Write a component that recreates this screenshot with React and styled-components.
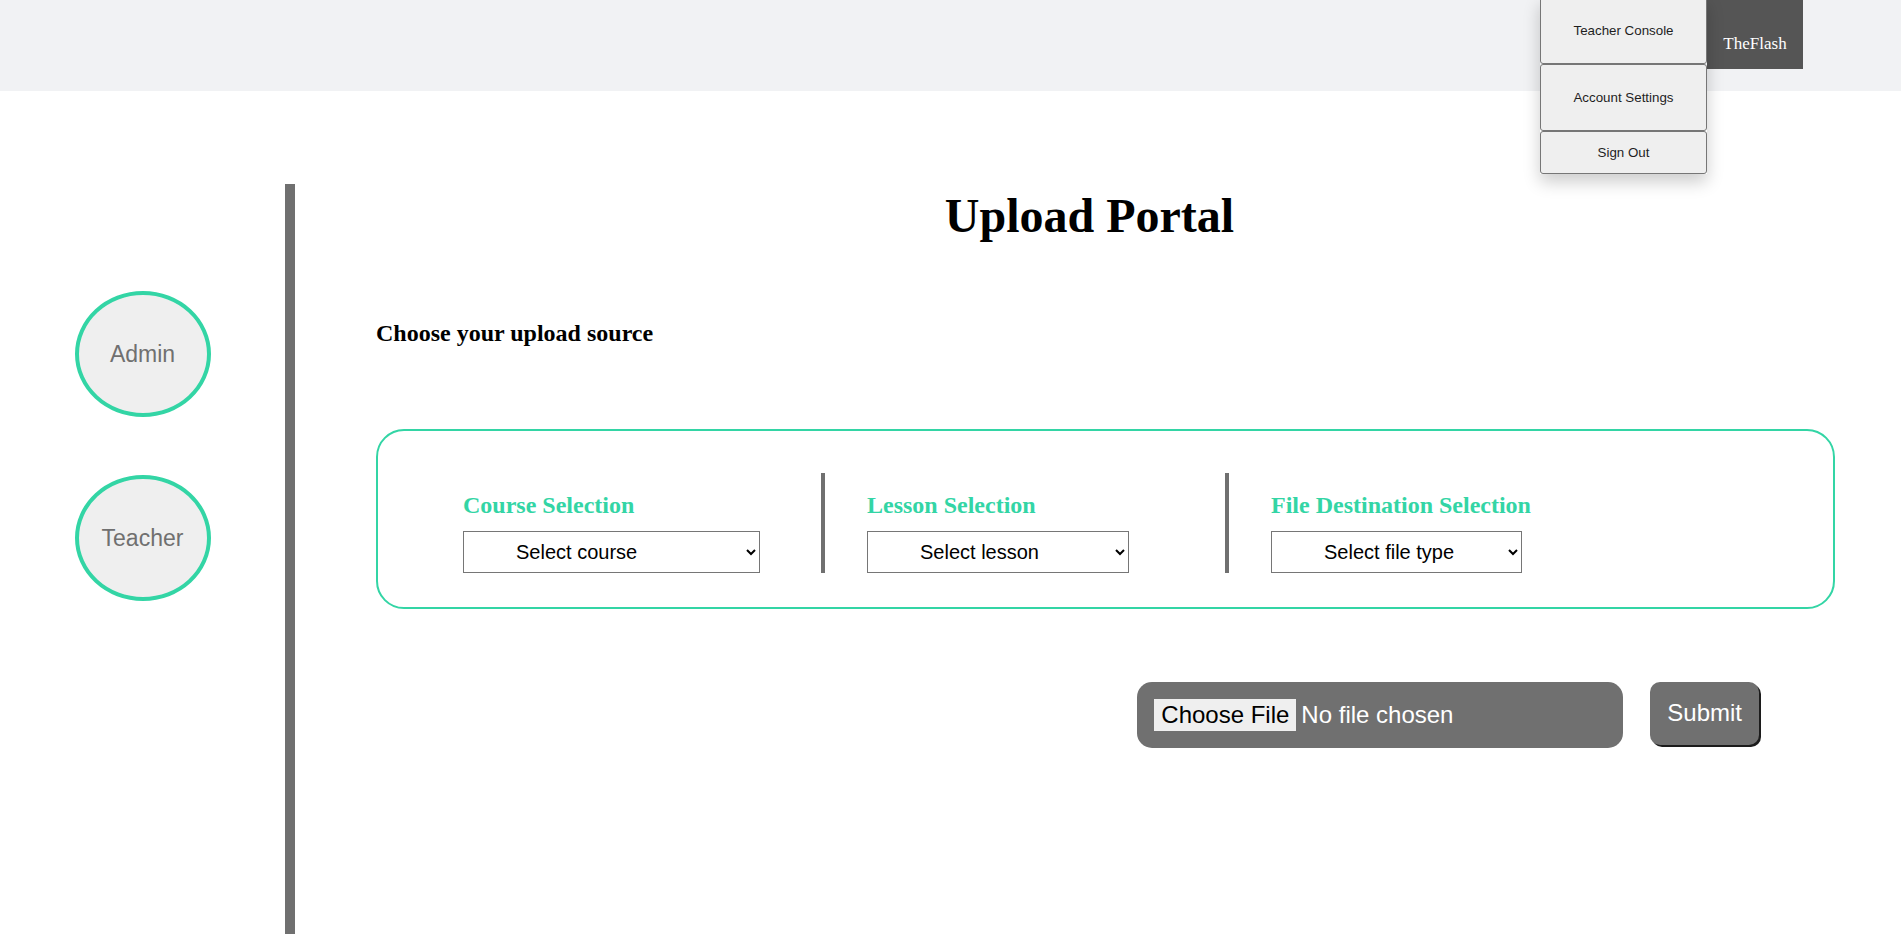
import styled, { createGlobalStyle, css } from "styled-components";

const GlobalStyle = createGlobalStyle`
  body {
    margin: 0;
    background: #fff;
    font-family: "Liberation Serif", "Times New Roman", serif;
  }
`

const Header = styled.header`
  height: 91px;
  background: #f1f2f4;
  display: flex;
  justify-content: flex-end;
  align-items: flex-start;
  padding-right: 98px;
  box-sizing: border-box;
`

const UserArea = styled.div`
  position: relative;
`

const Brand = styled.div`
  width: 96px;
  height: 69px;
  box-sizing: border-box;
  padding-bottom: 15px;
  background: #555555;
  color: #fff;
  font-size: 17px;
  line-height: 1.15;
  display: flex;
  align-items: flex-end;
  justify-content: center;
`

const Menu = styled.div`
  position: absolute;
  top: -3px;
  right: 100%;
  width: 167px;
  display: flex;
  flex-direction: column;
  box-shadow: 0px 8px 16px 0px rgba(0, 0, 0, 0.2);
  z-index: 2;
`

const MenuButton = styled.button`
  height: ${p => (p.$short ? 43 : 67)}px;
  padding: 0;
  background: #efefef;
  border: 1px solid #767676;
  border-radius: 3px;
  color: #1e1e1e;
  font-family: "Liberation Sans", Arial, sans-serif;
  font-size: 13.33px;
  cursor: pointer;
`

const Layout = styled.div`
  display: flex;
  margin-top: 93px;
  min-height: calc(100vh - 184px);
`

const Sidebar = styled.aside`
  width: 285px;
  flex-shrink: 0;
  border-right: 10px solid #707070;
  display: flex;
  flex-direction: column;
  align-items: center;
  gap: 58px;
  padding-top: 107px;
`

const RoleCircle = styled.button`
  width: 136px;
  height: 126px;
  box-sizing: border-box;
  padding: 0;
  border: 4px solid #33d5a5;
  border-radius: 50%;
  background: #efefef;
  color: #707070;
  font-family: "Liberation Sans", Arial, sans-serif;
  font-size: 23px;
  cursor: pointer;
`

const Main = styled.main`
  flex: 1;
  min-width: 0;
  padding: 4px 66px 0 81px;
`

const Title = styled.h1`
  margin: 0;
  padding-right: 32px;
  text-align: center;
  font-size: 48px;
  line-height: 1.15;
`

const Subtitle = styled.h2`
  margin: 77px 0 0;
  font-size: 24px;
  line-height: 1.15;
`

const SelectionBox = styled.section`
  margin-top: 81px;
  height: 180px;
  box-sizing: border-box;
  padding: 42px 0 0 85px;
  border: 2px solid #33d5a5;
  border-radius: 28px;
  display: flex;
`

const Column = styled.div`
  width: 358px;
  height: 100px;
  display: flex;
  flex-direction: column;
  justify-content: flex-end;
  align-items: flex-start;
  ${p => p.$divided && css`
    border-left: 4px solid #707070;
    padding-left: 42px;
  `}
`

const Label = styled.h3`
  margin: 0 0 11px;
  color: #33d5a5;
  font-size: 24px;
  line-height: 1.15;
`

const Select = styled.select`
  width: ${p => p.$w}px;
  height: 42px;
  padding: 0 4px 0 48px;
  background: #fff;
  color: #000;
  border: 1px solid #767676;
  border-radius: 0;
  font-family: "Liberation Sans", Arial, sans-serif;
  font-size: 20px;
`

const UploadRow = styled.div`
  display: flex;
  justify-content: flex-end;
  align-items: flex-start;
  gap: 27px;
  margin-top: 73px;
  padding-right: 76px;
`

const FileField = styled.div`
  width: 486px;
  height: 66px;
  box-sizing: border-box;
  padding: 17px;
  background: #707070;
  border-radius: 15px;
  overflow: hidden;
`

const FileInput = styled.input`
  color: #fff;
  font-family: "Liberation Sans", Arial, sans-serif;
  font-size: 24px;

  &::file-selector-button {
    height: 32px;
    padding: 0 7px;
    margin-right: 5px;
    background: #efefef;
    color: #000;
    border: none;
    font: inherit;
  }
`

const Submit = styled.button`
  height: 63px;
  padding: 0 17px;
  background: #707070;
  color: #fff;
  border: none;
  border-radius: 10px;
  box-shadow: 2px 2px 0 #1c1c1c;
  font-family: "Liberation Sans", Arial, sans-serif;
  font-size: 24px;
  cursor: pointer;
`

const sections = [
  { label: "Course Selection", placeholder: "Select course", width: 297 },
  { label: "Lesson Selection", placeholder: "Select lesson", width: 262 },
  { label: "File Destination Selection", placeholder: "Select file type", width: 251 },
]

const App = () => {
  return (
    <>
      <GlobalStyle />
      <Header>
        <UserArea>
          <Menu>
            <MenuButton>Teacher Console</MenuButton>
            <MenuButton>Account Settings</MenuButton>
            <MenuButton $short>Sign Out</MenuButton>
          </Menu>
          <Brand>TheFlash</Brand>
        </UserArea>
      </Header>
      <Layout>
        <Sidebar>
          <RoleCircle>Admin</RoleCircle>
          <RoleCircle>Teacher</RoleCircle>
        </Sidebar>
        <Main>
          <Title>Upload Portal</Title>
          <Subtitle>Choose your upload source</Subtitle>
          <SelectionBox>
            {sections.map((s, i) => (
              <Column key={s.label} $divided={i > 0}>
                <Label>{s.label}</Label>
                <Select $w={s.width} defaultValue="">
                  <option value="">{s.placeholder}</option>
                </Select>
              </Column>
            ))}
          </SelectionBox>
          <UploadRow>
            <FileField>
              <FileInput type="file" />
            </FileField>
            <Submit>Submit</Submit>
          </UploadRow>
        </Main>
      </Layout>
    </>
  )
}

export default App
